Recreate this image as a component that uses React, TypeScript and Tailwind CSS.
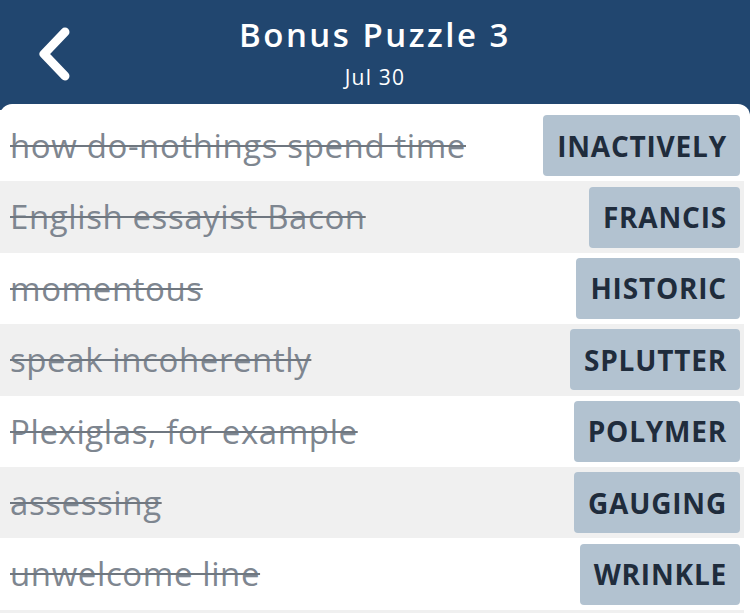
import React from "react";

const rows: [string, string][] = [
  ["how do-nothings spend time", "INACTIVELY"],
  ["English essayist Bacon", "FRANCIS"],
  ["momentous", "HISTORIC"],
  ["speak incoherently", "SPLUTTER"],
  ["Plexiglas, for example", "POLYMER"],
  ["assessing", "GAUGING"],
  ["unwelcome line", "WRINKLE"],
];

export default function App() {
  return (
    <div className="w-[750px] h-[613px] overflow-hidden bg-[#21466f] flex flex-col" style={{ fontFamily: "'Open Sans', 'Noto Sans', sans-serif" }}>
      <div className="h-[104px] shrink-0 flex items-start relative">
        <svg className="absolute left-[34px] top-[27px]" width="40" height="54" viewBox="0 0 40 54">
          <path d="M31 5 L10 27 L31 49" fill="none" stroke="white" strokeWidth="9" strokeLinecap="round" strokeLinejoin="round" />
        </svg>
        <div className="flex-1 flex flex-col items-center pt-[12px]">
          <div className="text-white text-[33px] leading-[46px] font-semibold tracking-[2.5px]">Bonus Puzzle 3</div>
          <div className="text-white text-[21px] leading-[26px] mt-[6px] tracking-[1.2px]">Jul 30</div>
        </div>
      </div>
      <div className="flex-1 bg-white rounded-t-[12px] pt-[6px] pr-[6px]">
        {rows.map(([clue, ans], i) => (
          <div key={i} className={`h-[71.4px] flex items-center justify-between pl-[10px] pr-[4px] ${i % 2 === 1 ? "bg-[#f0f0f0]" : "bg-white"}`}>
            <span className="text-[33px] tracking-[0.6px] text-[#7e8690] line-through decoration-[2px] decoration-[#6f7780]">{clue}</span>
            <span className="h-[61px] flex items-center pl-[14px] pr-[13px] bg-[#b2c2d0] rounded-[4px] text-[28px] font-bold tracking-[0.8px] text-[#1f2c3c]">{ans}</span>
          </div>
        ))}
        <div className="h-[10px] bg-[#f0f0f0]" />
      </div>
    </div>
  );
}
